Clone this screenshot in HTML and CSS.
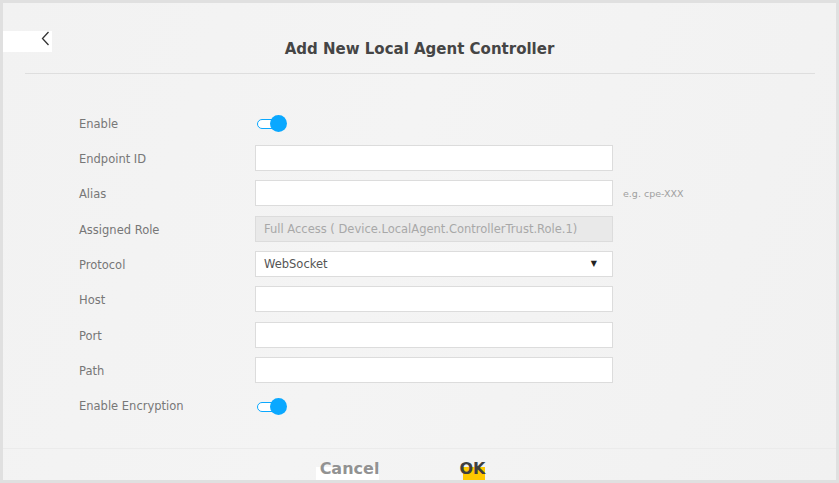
FILE: index.html
```html
<!DOCTYPE html>
<html lang="en">
<head>
  <meta charset="UTF-8" />
  <meta name="viewport" content="width=device-width, initial-scale=1.0" />
  <title>Add New Local Agent Controller</title>
  <link rel="stylesheet" href="styles.css">
</head>
<body>
  <div class="panel">
    <div class="top">
      <button class="back" aria-label="Back">
        <svg width="9" height="15" viewBox="0 0 9 15"><path d="M7.5 1 L1.5 7.5 L7.5 14" fill="none" stroke="#333" stroke-width="1.3"/></svg>
      </button>
      <h1>Add New Local Agent Controller</h1>
      <span></span>
    </div>
    <div class="rule"></div>

    <form class="form">
      <label>Enable</label>
      <div class="field"><span class="toggle"><span class="knob"></span></span></div>

      <label>Endpoint ID</label>
      <div class="field"><input type="text" /></div>

      <label>Alias</label>
      <div class="field"><input type="text" /><span class="hint">e.g. cpe-XXX</span></div>

      <label>Assigned Role</label>
      <div class="field"><input type="text" class="locked" value="Full Access ( Device.LocalAgent.ControllerTrust.Role.1)" disabled /></div>

      <label>Protocol</label>
      <div class="field"><div class="select"><span>WebSocket</span><span class="arrow">&#9660;</span></div></div>

      <label>Host</label>
      <div class="field"><input type="text" /></div>

      <label>Port</label>
      <div class="field"><input type="text" /></div>

      <label>Path</label>
      <div class="field"><input type="text" /></div>

      <label>Enable Encryption</label>
      <div class="field"><span class="toggle"><span class="knob"></span></span></div>
    </form>

    <div class="footer">
      <button class="btn cancel">Cancel</button>
      <button class="btn ok">OK</button>
    </div>
  </div>
</body>
</html>
```

FILE: styles.css
```css
:root {
  --frame: #e0e0e0;
  --panel: #f3f3f3;
  --label: #777777;
  --title: #454545;
  --line: #dedede;
  --border: #dcdcdc;
  --blue: #0aa8ff;
  --yellow: #ffc800;
}

* {
  box-sizing: border-box;
}

body {
  margin: 0;
  padding: 3px 3px 0 3px;
  background: var(--frame);
  font-family: "DejaVu Sans", sans-serif;
  height: 483px;
  overflow: hidden;
}

.panel {
  height: 477px;
  background: linear-gradient(110deg, #f2f2f2 0%, #f4f4f4 45%, #f1f1f1 100%);
  display: flex;
  flex-direction: column;
  overflow: hidden;
}

.top {
  display: grid;
  grid-template-columns: 1fr auto 1fr;
  align-items: start;
  height: 70px;
}

.back {
  width: 49px;
  height: 21px;
  margin-top: 28px;
  border: none;
  background: #fff;
  padding: 0 2px 0 0;
  display: flex;
  justify-content: flex-end;
  align-items: flex-start;
  cursor: pointer;
}

h1 {
  margin: 36px 0 0 0;
  font-size: 15px;
  font-weight: bold;
  color: var(--title);
  line-height: 20px;
}

.rule {
  height: 1px;
  background: var(--line);
  margin: 0 21px 0 22px;
}

.form {
  margin: 31px 0 0 76px;
  display: grid;
  grid-template-columns: 176px 1fr;
  grid-auto-rows: 35.33px;
  align-items: center;
}

label {
  font-size: 11.5px;
  color: var(--label);
  margin-top: 2px;
}

.field {
  display: flex;
  align-items: center;
}

input {
  width: 358px;
  height: 26px;
  border: 1px solid var(--border);
  background: #fff;
  font-family: inherit;
  font-size: 11.5px;
  padding: 0 8px;
  color: #555;
}

input.locked {
  background: #e9e9e9;
  color: #a8a8a8;
}

.hint {
  margin-left: 10px;
  font-size: 9.5px;
  color: #a0a0a0;
}

.select {
  width: 358px;
  height: 26px;
  border: 1px solid var(--border);
  background: #fff;
  display: flex;
  justify-content: space-between;
  align-items: center;
  padding: 0 15px 0 8px;
  font-size: 11.5px;
  color: #555;
}

.arrow {
  font-size: 8px;
  color: #222;
}

.toggle {
  position: relative;
  width: 22px;
  height: 10px;
  margin: 3px 0 0 2px;
  border: 1px solid var(--blue);
  border-radius: 5px;
  background: #fff;
}

.knob {
  position: absolute;
  left: 12px;
  top: -5px;
  width: 17px;
  height: 17px;
  border-radius: 50%;
  background: var(--blue);
}

.footer {
  margin-top: auto;
  height: 32px;
  border-top: 1px solid #ebebeb;
  display: flex;
  justify-content: center;
  gap: 80px;
  padding: 9px 34px 0 0;
}

.btn {
  border: none;
  background: none;
  font-family: inherit;
  font-size: 16px;
  font-weight: bold;
  padding: 0;
  height: 22px;
  line-height: 18px;
  cursor: pointer;
}

.cancel {
  color: #929292;
  padding-left: 6px;
  margin-left: -6px;
  background: linear-gradient(to bottom, transparent 0 9px, #fff 9px);
  background-size: calc(100% - 2px) 100%;
  background-position: right top;
  background-repeat: no-repeat;
}

.ok {
  color: #3f3f3f;
  background: linear-gradient(to bottom, transparent 0 9px, var(--yellow) 9px);
  background-size: 22px 100%;
  background-position: right top;
  background-repeat: no-repeat;
}
```
